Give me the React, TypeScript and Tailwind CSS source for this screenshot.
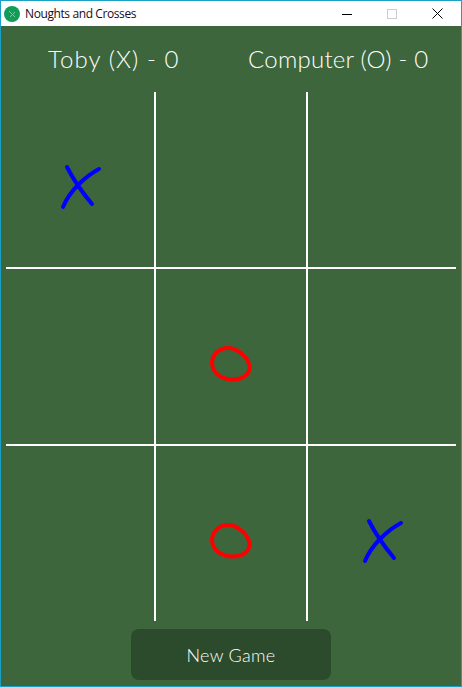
const FONT = "font-['Lato','Open_Sans',sans-serif]"

function Cross() {
  return (
    <svg width="44" height="52" viewBox="0 0 44 52" fill="none" stroke="#0000ff" strokeWidth="4" strokeLinecap="round">
      <path d="M9 5 C14 15 24 30 34 42" />
      <path d="M41 7 C28 14 12 28 5 45" />
    </svg>
  )
}

function Nought() {
  return (
    <svg width="44" height="38" viewBox="0 0 44 38" fill="none" stroke="#ff0000" strokeWidth="4" strokeLinecap="round">
      <path d="M3 17 C3 9 10 2 19 2 C27 2 37 9 40 18 C42 25 38 31 29 33 C19 35 10 31 6 26 C4 23 3 20 3 17 Z" />
    </svg>
  )
}

function Cell({ mark }: { mark?: 'x' | 'o' }) {
  return (
    <div className="flex items-center justify-center bg-[#3d663d] pt-[17px]">
      {mark === 'x' && <Cross />}
      {mark === 'o' && <Nought />}
    </div>
  )
}

export default function App() {
  return (
    <div className="flex h-[687px] w-[462px] flex-col border border-[#1ba1c5] bg-[#3d663d]">
      <div className="flex h-[25px] shrink-0 items-center bg-white">
        <svg className="ml-[3px]" width="16" height="16" viewBox="0 0 16 16">
          <circle cx="8" cy="8" r="8" fill="#0f9d58" />
          <path d="M5 5 L11 11 M11 6 L6 11" stroke="#7cc8a0" strokeWidth="1" />
        </svg>
        <span className="ml-[5px] font-['Open_Sans',sans-serif] text-[12px] tracking-[-0.4px] text-[#1a0a1e]">Noughts and Crosses</span>
        <div className="ml-auto flex h-full items-center">
          <svg className="mr-[35px]" width="10" height="10" viewBox="0 0 10 10">
            <path d="M0 5.5 H10" stroke="#000" strokeWidth="1" />
          </svg>
          <svg className="mr-[35px]" width="10" height="10" viewBox="0 0 10 10">
            <rect x="0.5" y="0.5" width="9" height="9" fill="none" stroke="#cccccc" strokeWidth="1" />
          </svg>
          <svg className="mr-[18px]" width="11" height="11" viewBox="0 0 11 11">
            <path d="M0.5 0.5 L10.5 10.5 M10.5 0.5 L0.5 10.5" stroke="#000" strokeWidth="1" />
          </svg>
        </div>
      </div>

      <div className={`flex h-[66px] shrink-0 items-center text-[24px] font-light text-white ${FONT}`}>
        <span className="ml-[47px] w-[200px] tracking-[1.1px]">Toby (X) - 0</span>
        <span className="tracking-[0.25px]">Computer (O) - 0</span>
      </div>

      <div className="mx-[5px] grid h-[529px] shrink-0 grid-cols-[148px_150px_148px] grid-rows-[175px_175px_175px] gap-[2px] bg-white">
        <Cell mark="x" />
        <Cell />
        <Cell />
        <Cell />
        <Cell mark="o" />
        <Cell />
        <Cell />
        <Cell mark="o" />
        <Cell mark="x" />
      </div>

      <button className={`mt-[8px] flex h-[51px] w-[200px] items-center justify-center self-center rounded-lg bg-[#2c4a2c] pt-[2px] text-[18px] font-light tracking-[0.3px] text-white ${FONT}`}>
        New Game
      </button>
    </div>
  )
}
